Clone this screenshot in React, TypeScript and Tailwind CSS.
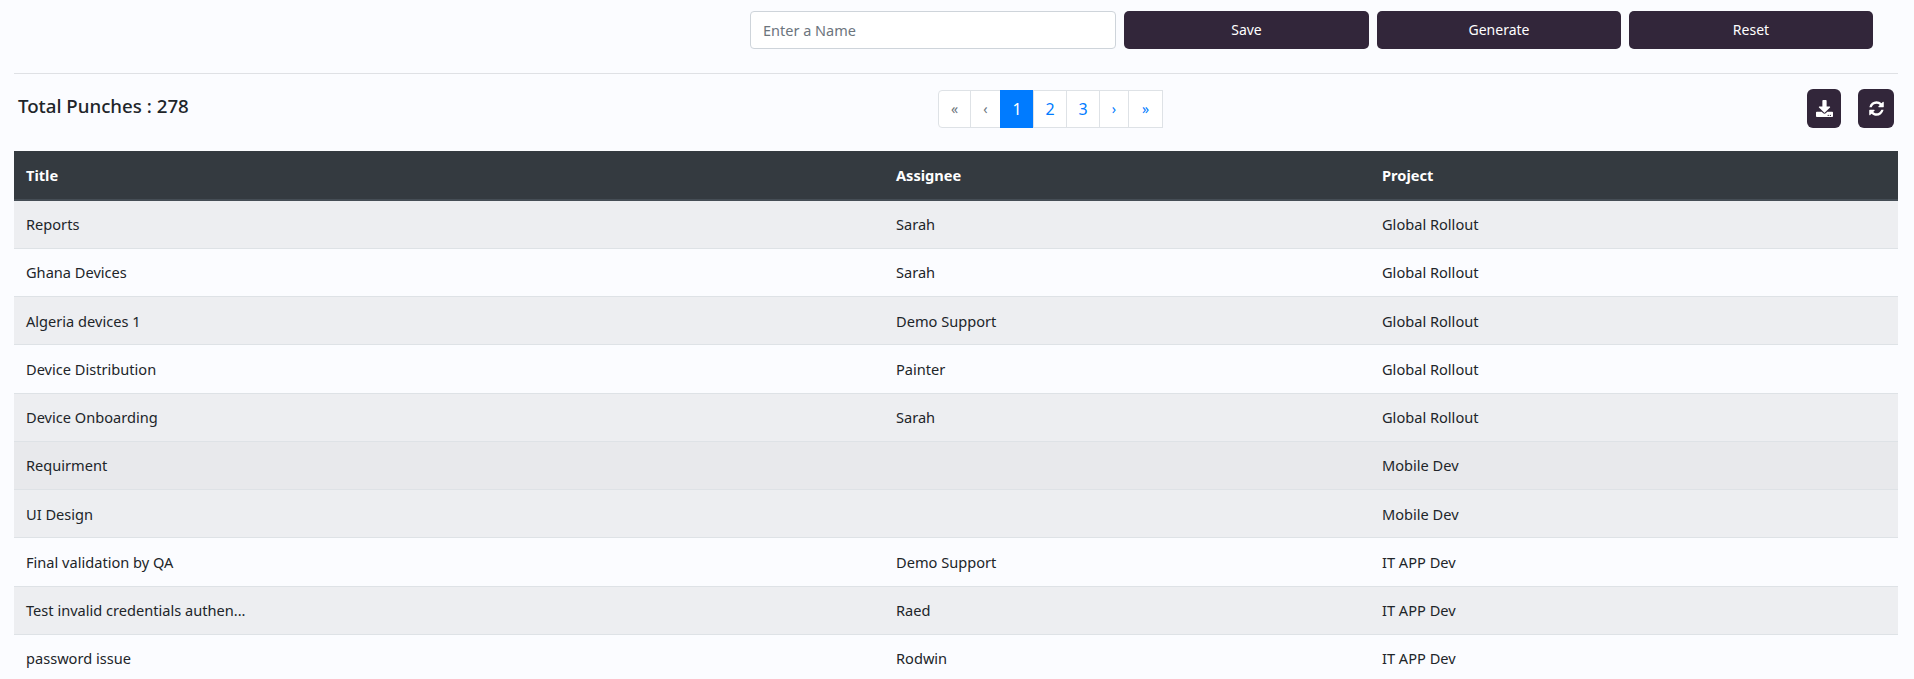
import { FaDownload } from 'react-icons/fa';

const rows = [
  { title: 'Reports', assignee: 'Sarah', project: 'Global Rollout', bg: 'bg-[#edeef1]' },
  { title: 'Ghana Devices', assignee: 'Sarah', project: 'Global Rollout', bg: '' },
  { title: 'Algeria devices 1', assignee: 'Demo Support', project: 'Global Rollout', bg: 'bg-[#edeef1]' },
  { title: 'Device Distribution', assignee: 'Painter', project: 'Global Rollout', bg: '' },
  { title: 'Device Onboarding', assignee: 'Sarah', project: 'Global Rollout', bg: 'bg-[#edeef1]' },
  { title: 'Requirment', assignee: '', project: 'Mobile Dev', bg: 'bg-[#e8e9ec]' },
  { title: 'UI Design', assignee: '', project: 'Mobile Dev', bg: 'bg-[#edeef1]' },
  { title: 'Final validation by QA', assignee: 'Demo Support', project: 'IT APP Dev', bg: '' },
  { title: 'Test invalid credentials authen...', assignee: 'Raed', project: 'IT APP Dev', bg: 'bg-[#edeef1]' },
  { title: 'password issue', assignee: 'Rodwin', project: 'IT APP Dev', bg: '' },
];

const pages = [
  { label: '«', className: 'w-[33px] rounded-l border-[#dee2e6] bg-white text-sm text-[#6c757d]' },
  { label: '‹', className: 'w-[31px] border-[#dee2e6] bg-white text-sm text-[#6c757d]' },
  { label: '1', className: 'w-[34px] border-[#007bff] bg-[#007bff] text-white' },
  { label: '2', className: 'w-[34px] border-[#dee2e6] bg-white text-[#007bff]' },
  { label: '3', className: 'w-[34px] border-[#dee2e6] bg-white text-[#007bff]' },
  { label: '›', className: 'w-[30px] border-[#dee2e6] bg-white text-sm text-[#007bff]' },
  { label: '»', className: 'w-[35px] border-[#dee2e6] bg-white text-sm text-[#007bff]' },
];

function ActionButton({ label, width }: { label: string; width: string }) {
  return (
    <button className={`h-[38px] rounded-[5px] bg-[#32263a] text-sm text-white ${width}`}>
      {label}
    </button>
  );
}

// Font Awesome 4 "refresh", the package only has the thinner v5 one
function RefreshIcon() {
  return (
    <svg viewBox="0 0 1792 1792" width="17" height="17" fill="currentColor">
      <path d="M1639 1056q0 5-1 7-64 268-268 434.5t-478 166.5q-146 0-282.5-55t-243.5-157l-129 129q-19 19-45 19t-45-19-19-45v-448q0-26 19-45t45-19h448q26 0 45 19t19 45-19 45l-137 137q71 66 161 102t187 36q134 0 250-65t186-179q11-17 53-117 8-23 30-23h192q13 0 22.5 9.5t9.5 22.5zm25-800v448q0 26-19 45t-45 19h-448q-26 0-45-19t-19-45 19-45l138-138q-148-137-349-137-134 0-250 65t-186 179q-11 17-53 117-8 23-30 23h-199q-13 0-22.5-9.5t-9.5-22.5v-7q65-268 270-434.5t480-166.5q146 0 284 55.5t245 156.5l130-129q19-19 45-19t45 19 19 45z" />
    </svg>
  );
}

export default function App() {
  return (
    <main className="h-[679px] overflow-hidden bg-[#fbfcff] pl-[14px] pr-[16px] font-['Noto_Sans',sans-serif] text-[14.6px] text-[#212529]">
      <div className="flex justify-end gap-2 pr-[25px] pt-[11px]">
        <input
          placeholder="Enter a Name"
          className="h-[38px] w-[366px] rounded border border-[#ced4da] bg-white px-3 text-[14.5px] placeholder:text-[#6c757d]"
        />
        <ActionButton label="Save" width="w-[245px]" />
        <ActionButton label="Generate" width="w-[244px]" />
        <ActionButton label="Reset" width="w-[244px]" />
      </div>

      <hr className="mt-[24px] border-[#dfe1e5]" />

      <div className="mt-[15px] flex h-[39px] items-center justify-between">
        <h5 className="mb-1 w-[400px] pl-1 text-[18.7px] font-medium">Total Punches : 278</h5>
        <nav className="ml-[190px] flex h-[38px]">
          {pages.map((page) => (
            <a
              key={page.label}
              className={`-ml-px flex items-center justify-center border text-base ${page.className}`}
            >
              {page.label}
            </a>
          ))}
        </nav>
        <div className="flex w-[400px] justify-end gap-[17px] pr-1">
          <button className="flex h-[39px] w-[34px] items-center justify-center rounded-md bg-[#32263a] text-white">
            <FaDownload size={17} />
          </button>
          <button className="flex h-[39px] w-[36px] items-center justify-center rounded-md bg-[#32263a] text-white">
            <RefreshIcon />
          </button>
        </div>
      </div>

      <table className="mt-[23px] w-full table-fixed border-collapse">
        <thead className="bg-[#343a40] text-white">
          <tr className="h-[49px] border-b-2 border-[#454d55]">
            <th className="w-[870px] px-3 pt-[2px] text-left font-bold">Title</th>
            <th className="w-[486px] px-3 pt-[2px] text-left font-bold">Assignee</th>
            <th className="px-3 pt-[2px] text-left font-bold">Project</th>
          </tr>
        </thead>
        <tbody>
          {rows.map((row) => (
            <tr key={row.title} className={`h-[48.25px] border-b border-[#dee2e6] ${row.bg}`}>
              <td className="px-3 pt-[2px]">{row.title}</td>
              <td className="px-3 pt-[2px]">{row.assignee}</td>
              <td className="px-3 pt-[2px]">{row.project}</td>
            </tr>
          ))}
        </tbody>
      </table>
    </main>
  );
}
